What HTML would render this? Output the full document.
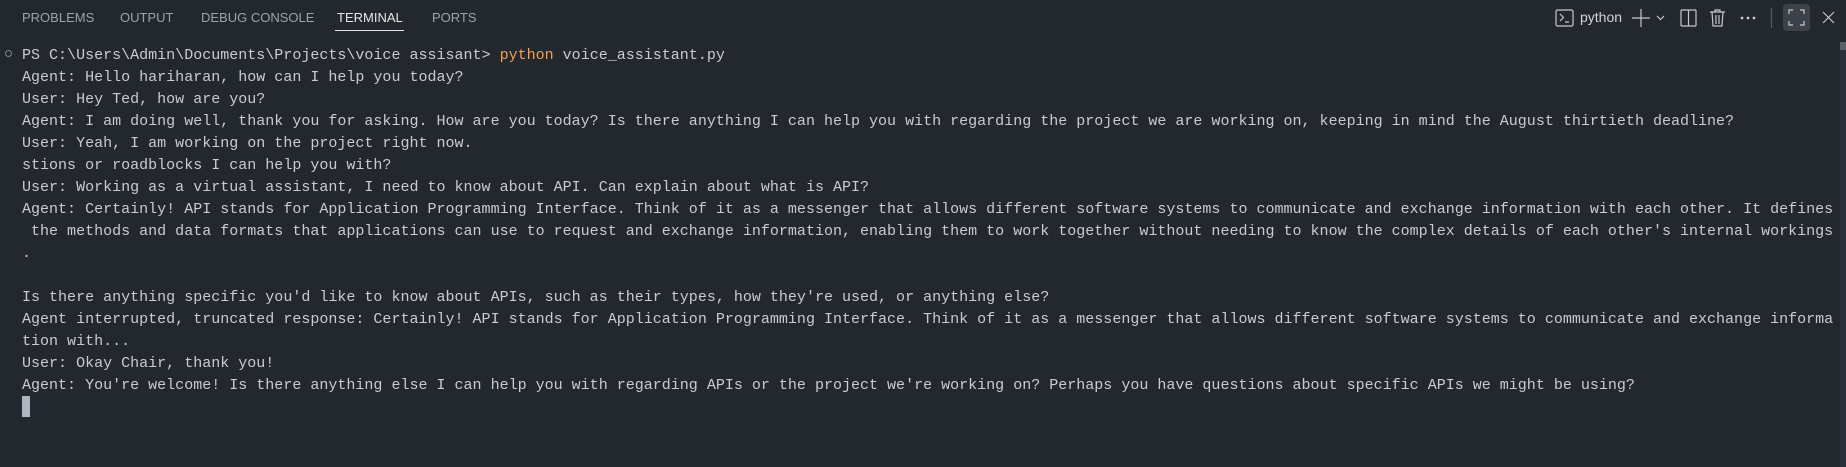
<!DOCTYPE html>
<html><head><meta charset="utf-8"><style>
html,body{margin:0;padding:0;width:1846px;height:467px;background:#23272e;overflow:hidden}
.tabs{position:absolute;top:0;left:0;height:36px;width:100%;font-family:"Liberation Sans",sans-serif;font-size:13px;color:#9ca3ad}
.tab{position:absolute;top:10px}
.act{color:#e6e6e6}
.ul{position:absolute;left:335px;top:30px;width:69px;height:1px;background:#e6e6e6}
pre{position:absolute;left:22px;top:44px;margin:0;font-family:"Liberation Mono",monospace;font-size:15.03px;line-height:22px;color:#c8ccd2;white-space:pre}
.o{color:#ef9f56}
.dot{position:absolute;left:5px;top:50px;width:7px;height:7px;border:1.5px solid #7d838c;border-radius:50%;box-sizing:border-box}
.cur{position:absolute;left:22px;top:396px;width:8px;height:21px;background:#aeb4bf}
.ic{position:absolute;top:0}
.sb{position:absolute;left:1840px;top:42px;width:6px;height:425px;background:#2c3038}
.sb2{position:absolute;left:1840px;top:42px;width:6px;height:8px;background:#5a5f67}
</style></head><body>
<div class="tabs">
<span class="tab" style="left:22px">PROBLEMS</span>
<span class="tab" style="left:120px">OUTPUT</span>
<span class="tab" style="left:201px">DEBUG CONSOLE</span>
<span class="tab act" style="left:337px">TERMINAL</span>
<span class="tab" style="left:432px">PORTS</span>
<div class="ul"></div>
<span class="tab" style="left:1580px;color:#d0d4da;font-size:14px;top:9px">python</span>
</div>
<svg class="ic" width="1846" height="36" style="left:0" fill="none" stroke="#c5c9cf" stroke-width="1.2">
<rect x="1556" y="10" width="17" height="16" rx="1.5"/>
<path d="M1560 14l3.5 3.5-3.5 3.5M1565 22h4"/>
<path d="M1641 9v18M1632 18h18"/>
<path d="M1657 16l3.5 3.5 3.5-3.5"/>
<rect x="1681" y="10" width="15" height="16" rx="1"/><path d="M1688.5 10v16"/>
<path d="M1710 12h15M1715 12v-2h5v2M1712 12l1 14h9l1-14M1716 15v9M1719 15v9"/>
<circle cx="1742" cy="18" r=".8" fill="#c5c9cf"/><circle cx="1748" cy="18" r=".8" fill="#c5c9cf"/><circle cx="1754" cy="18" r=".8" fill="#c5c9cf"/>
<path d="M1771.5 8v20" stroke="#555a62"/>
<rect x="1783" y="4" width="27" height="27" rx="4" fill="#3d424a" stroke="none"/>
<path d="M1789 14v-4h4M1800 10h4v4M1804 21v4h-4M1793 25h-4v-4"/>
<path d="M1823 12l11 11M1834 12l-11 11"/>
</svg>
<div class="dot"></div>
<pre>PS C:\Users\Admin\Documents\Projects\voice assisant&gt; <span class="o">python</span> voice_assistant.py
Agent: Hello hariharan, how can I help you today?
User: Hey Ted, how are you?
Agent: I am doing well, thank you for asking. How are you today? Is there anything I can help you with regarding the project we are working on, keeping in mind the August thirtieth deadline?
User: Yeah, I am working on the project right now.
stions or roadblocks I can help you with?
User: Working as a virtual assistant, I need to know about API. Can explain about what is API?
Agent: Certainly! API stands for Application Programming Interface. Think of it as a messenger that allows different software systems to communicate and exchange information with each other. It defines
 the methods and data formats that applications can use to request and exchange information, enabling them to work together without needing to know the complex details of each other's internal workings
.

Is there anything specific you'd like to know about APIs, such as their types, how they're used, or anything else?
Agent interrupted, truncated response: Certainly! API stands for Application Programming Interface. Think of it as a messenger that allows different software systems to communicate and exchange informa
tion with...
User: Okay Chair, thank you!
Agent: You're welcome! Is there anything else I can help you with regarding APIs or the project we're working on? Perhaps you have questions about specific APIs we might be using?</pre>
<div class="cur"></div>
<div class="sb"></div><div class="sb2"></div>
</body></html>
